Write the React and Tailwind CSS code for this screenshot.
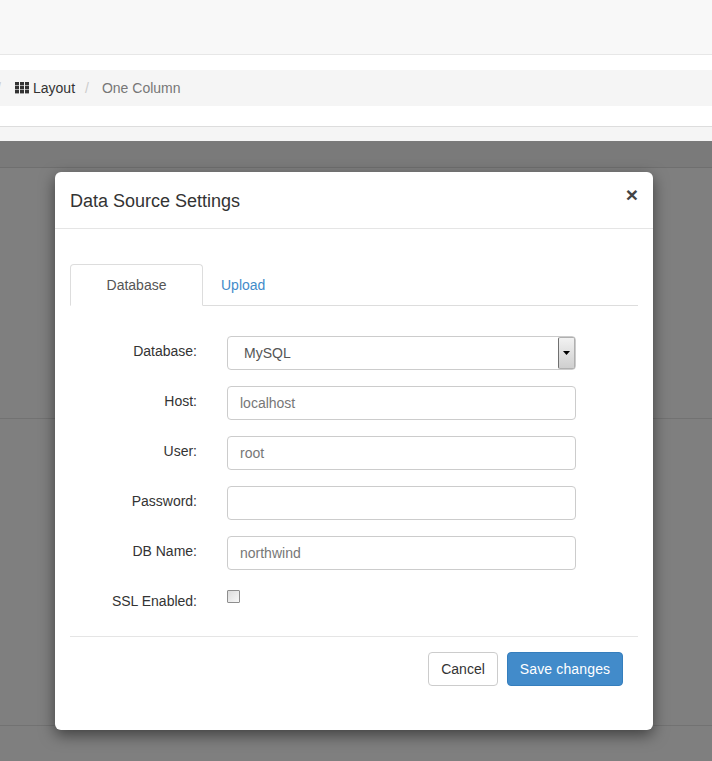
import React from "react";

const fields = [
  { label: "Host:", value: "localhost" },
  { label: "User:", value: "root" },
  { label: "Password:", value: "" },
  { label: "DB Name:", value: "northwind" },
];

function GridIcon() {
  return (
    <svg width="14" height="12" viewBox="0 0 14 12" className="shrink-0" fill="#333">
      {[0, 5, 10].map((x) =>
        [0, 4, 8].map((y) => <rect key={`${x}-${y}`} x={x} y={y} width="4" height="3.4" />)
      )}
    </svg>
  );
}

function FormRow({ label, children }) {
  return (
    <div className="flex items-center h-[34px]">
      <div className="w-[127px] text-right text-[#333] pb-[3px]">{label}</div>
      <div className="ml-[30px] w-[349px]">{children}</div>
    </div>
  );
}

function Modal() {
  return (
    <div className="absolute left-[55px] top-[31px] w-[598px] h-[558px] bg-white rounded-[6px] shadow-[0_5px_15px_rgba(0,0,0,0.5)]">
      <div className="relative h-[57px] border-b border-[#e5e5e5] px-[15px] pt-[19px]">
        <h4 className="text-[18px] leading-[20px] text-[#333]">Data Source Settings</h4>
        <span className="absolute right-[15px] top-[12px] text-[21px] leading-[21px] font-bold text-[#444]">×</span>
      </div>

      <div className="px-[15px] pt-[35px]">
        <div className="flex h-[42px] border-b border-[#ddd]">
          <div className="w-[133px] h-[42px] bg-white border border-[#ddd] border-b-white rounded-t-[4px] text-center text-[#555] leading-[40px]">
            Database
          </div>
          <div className="pl-[18px] text-[#428bca] leading-[42px]">Upload</div>
        </div>

        <div className="flex flex-col gap-[16px] mt-[30px]">
          <FormRow label="Database:">
            <div className="flex items-center justify-between h-[34px] border border-[#ccc] rounded-[4px] pl-[16px] text-[#555]">
              <span>MySQL</span>
              <div className="flex items-center justify-center w-[17px] h-[32px] border border-[#b0b0b0] border-l-[#707070] rounded-[2px] bg-gradient-to-b from-[#f2f2f2] to-[#cfcfcf]">
                <svg width="7" height="4" viewBox="0 0 7 4" fill="#000">
                  <path d="M0 0h7L3.5 4z" />
                </svg>
              </div>
            </div>
          </FormRow>
          {fields.map((f) => (
            <FormRow key={f.label} label={f.label}>
              <div className="h-[34px] border border-[#ccc] rounded-[4px] px-[12px] leading-[32px] text-[#777]">
                {f.value}
              </div>
            </FormRow>
          ))}
          <div className="flex h-[34px]">
            <div className="w-[127px] text-right text-[#333] pt-[5px]">SSL Enabled:</div>
            <div className="ml-[30px] mt-[4px] w-[13px] h-[13px] border border-[#8e8e8e] bg-gradient-to-br from-[#dcdcdc] to-[#f8f8f8] rounded-[1px]" />
          </div>
        </div>

        <div className="border-t border-[#e5e5e5] mt-[16px] pt-[15px] pr-[15px] flex justify-end gap-[9px]">
          <div className="w-[70px] h-[34px] border border-[#ccc] rounded-[4px] text-center leading-[32px] text-[#333]">
            Cancel
          </div>
          <div className="w-[116px] h-[34px] border border-[#357ebd] bg-[#428bca] rounded-[4px] text-center leading-[32px] text-white tracking-[0.15px]">
            Save changes
          </div>
        </div>
      </div>
    </div>
  );
}

export default function App() {
  return (
    <div className="relative h-[761px] overflow-hidden bg-white text-[14px] font-['Liberation_Sans',Arial,sans-serif]">
      <div className="h-[55px] bg-[#f8f8f8] border-b border-[#e7e7e7]" />
      <div className="mt-[15px] h-[36px] bg-[#f5f5f5] flex items-center text-[14px]">
        <span className="text-[#ccc] w-[15px] -ml-[3px] pl-0">/</span>
        <span className="ml-[3px] flex items-center gap-[4px] text-[#333]">
          <GridIcon />
          Layout
        </span>
        <span className="text-[#ccc] ml-[10px]">/</span>
        <span className="text-[#777] ml-[13px]">One Column</span>
      </div>
      <div className="h-[21px] border-b border-[#ddd]" />
      <div className="h-[14px] bg-[#f5f5f5]" />

      <div className="absolute left-0 right-0 top-[141px] bottom-0 bg-[#7f7f7f]">
        <div className="h-[27px] bg-[#7a7a7a] border-b border-[#6f6f6f]" />
        <div className="h-[251px] border-b border-[#727272]" />
        <div className="h-[307px] border-b border-[#727272]" />
        <Modal />
      </div>
    </div>
  );
}
